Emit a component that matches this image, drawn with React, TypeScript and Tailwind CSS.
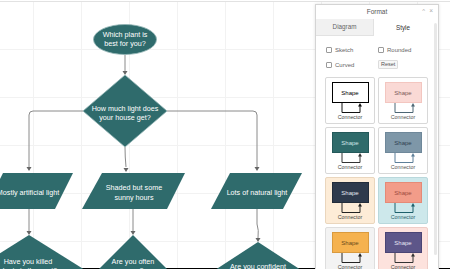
import React from 'react';

type CardStyle = {
  card: string;
  shape: string;
  line: string;
  label: string;
};

const cards: CardStyle[] = [
  { card: 'bg-white border-[#d8d8d8]', shape: 'bg-white border-[1.5px] border-black text-black', line: '#111111', label: 'text-[#444]' },
  { card: 'bg-white border-[#d8d8d8]', shape: 'bg-[#fad9d5] border border-[#f3c6c0] text-[#7a5a58]', line: '#4d6674', label: 'text-[#555]' },
  { card: 'bg-white border-[#d8d8d8]', shape: 'bg-[#2f6b6b] border border-[#24595a] text-[#cfe6e6]', line: '#333333', label: 'text-[#444]' },
  { card: 'bg-white border-[#d8d8d8]', shape: 'bg-[#7e97a8] border border-[#6f889a] text-[#2f4150]', line: '#5d7f99', label: 'text-[#555]' },
  { card: 'bg-[#fdecd7] border-[#ead6bd]', shape: 'bg-[#2e3a4c] border border-[#222c3a] text-[#e4e8ee]', line: '#222222', label: 'text-[#444]' },
  { card: 'bg-[#cde8eb] border-[#b9d8dc]', shape: 'bg-[#f29c89] border border-[#e58a77] text-[#9b4a3e]', line: '#1d5f6b', label: 'text-[#2b5f6b]' },
  { card: 'bg-[#f3f3f3] border-[#dedede]', shape: 'bg-[#f5b24f] border border-[#d99a3e] text-[#6a4a1a]', line: '#222222', label: 'text-[#444]' },
  { card: 'bg-[#fde2dd] border-[#efcdc7]', shape: 'bg-[#5d5689] border border-[#4a4474] text-[#e6e4f2]', line: '#333333', label: 'text-[#444]' },
];

const StyleCard: React.FC<{ s: CardStyle }> = ({ s }) => (
  <div className={`w-[50px] h-[47px] border rounded-[2px] flex flex-col items-center pt-[4px] ${s.card}`}>
    <div className={`w-[37px] h-[21px] flex items-center justify-center text-[6px] leading-none ${s.shape}`}>Shape</div>
    <svg width="37" height="11" className="block">
      <path d="M10 0 V9.5 H28 V2" fill="none" stroke={s.line} strokeWidth="1" />
      <polygon points="26,3.5 28,0 30,3.5" fill={s.line} />
    </svg>
    <div className={`text-[5.3px] leading-none mt-[1px] ${s.label}`}>Connector</div>
  </div>
);

const Check: React.FC<{ label: string }> = ({ label }) => (
  <div className="flex items-center gap-[3px]">
    <div className="w-[6px] h-[6px] border border-[#9a9a9a] rounded-[1px] bg-white" />
    <span className="text-[6px] leading-none text-[#666]">{label}</span>
  </div>
);

const FlowText: React.FC<{ x: number; y: number; children: React.ReactNode }> = ({ x, y, children }) => (
  <text x={x} y={y} textAnchor="middle" fill="#ffffff" fontSize="7.2">
    {children}
  </text>
);

const Flowchart: React.FC = () => {
  const teal = '#2f6b6c';
  const edge = '#8a8a8a';
  const arrow = (x: number, y: number) => (
    <polygon points={`${x - 2.5},${y - 4} ${x + 2.5},${y - 4} ${x},${y}`} fill="#666" />
  );
  return (
    <svg width="450" height="268" className="absolute left-0 top-0" fontFamily="'Liberation Sans', Arial, sans-serif">
      {/* start */}
      <ellipse cx="125" cy="37.5" rx="31.5" ry="15" fill={teal} stroke="#8fb3b3" strokeWidth="0.8" />
      <FlowText x={125} y={35}>Which plant is</FlowText>
      <FlowText x={125} y={44}>best for you?</FlowText>
      <line x1="125" y1="53" x2="125" y2="70" stroke={edge} />
      {arrow(125, 73)}

      {/* main decision */}
      <polygon points="125,73 167,109 125,145 83,109" fill={teal} stroke="#8fb3b3" strokeWidth="0.8" />
      <FlowText x={125} y={108.5}>How much light does</FlowText>
      <FlowText x={125} y={117.5}>your house get?</FlowText>

      <path d="M83 109 H33 Q29 109 29 113 V165" fill="none" stroke={edge} />
      {arrow(29, 169)}
      <path d="M167 109 H253 Q257 109 257 113 V165" fill="none" stroke={edge} />
      {arrow(257, 169)}
      <path d="M125 145 Q125 155 126 165" fill="none" stroke={edge} />
      {arrow(126, 170)}

      {/* light options */}
      <polygon points="3,171 73,171 55,207 -15,207" fill={teal} />
      <FlowText x={28} y={192.5}>Mostly artificial light</FlowText>
      <polygon points="102,171 185,171 167,207 82,207" fill={teal} />
      <FlowText x={134} y={188}>Shaded but some</FlowText>
      <FlowText x={134} y={197.5}>sunny hours</FlowText>
      <polygon points="230,171 302,171 283,207 211,207" fill={teal} />
      <FlowText x={257} y={192.5}>Lots of natural light</FlowText>

      <line x1="29" y1="207" x2="29" y2="229" stroke={edge} />
      {arrow(29, 233)}
      <line x1="133" y1="207" x2="133" y2="229" stroke={edge} />
      {arrow(133, 233)}
      <path d="M257 207 V222 Q259 228 258 236" fill="none" stroke={edge} />
      {arrow(258, 240)}

      {/* second decisions */}
      <polygon points="29,233 85,268 29,303 -27,268" fill={teal} />
      <FlowText x={28} y={262}>Have you killed</FlowText>
      <FlowText x={28} y={271}>plants in the past?</FlowText>
      <polygon points="133,233 168,268 133,303 98,268" fill={teal} />
      <FlowText x={133} y={262}>Are you often</FlowText>
      <FlowText x={133} y={271}>away?</FlowText>
      <polygon points="258,240 301,268 258,296 215,268" fill={teal} />
      <FlowText x={258} y={267}>Are you confident</FlowText>
    </svg>
  );
};

export default function App() {
  return (
    <div className="w-[450px] h-[269px] overflow-hidden bg-white font-['Liberation_Sans',Arial,sans-serif] flex flex-col">
      <div className="h-[1px] bg-white" />
      <div className="relative flex-1 border-t border-[#e2e2e2] bg-white bg-[linear-gradient(to_right,#f2f2f2_1px,transparent_1px),linear-gradient(to_bottom,#f2f2f2_1px,transparent_1px)] [background-size:48px_48px] [background-position:33px_47px]">
        <Flowchart />

        {/* floating format window */}
        <div className="absolute left-[315px] top-[2px] w-[124px] h-[280px] bg-white border border-[#d4d4d4] shadow-[0_0_3px_rgba(0,0,0,0.12)] flex flex-col">
          <div className="relative h-[14px] flex items-center justify-center">
            <span className="text-[6.5px] text-[#555] leading-none">Format</span>
            <span className="absolute right-[13px] top-[3px] text-[6px] text-[#aaa] leading-none">^</span>
            <span className="absolute right-[5px] top-[3px] text-[6.5px] text-[#aaa] leading-none">×</span>
          </div>
          <div className="flex flex-1 min-h-0">
            <div className="flex-1 flex flex-col">
              <div className="flex h-[17px]">
                <div className="w-[58px] bg-[#f1f1f1] border-b border-r border-[#e2e2e2] flex items-center justify-center text-[6.3px] text-[#666]">Diagram</div>
                <div className="flex-1 flex items-center justify-center text-[6.3px] text-[#333]">Style</div>
              </div>
              <div className="pl-[10px] pt-[11px] flex flex-col gap-[7px]">
                <div className="flex items-center">
                  <div className="w-[52px]"><Check label="Sketch" /></div>
                  <Check label="Rounded" />
                </div>
                <div className="flex items-center">
                  <div className="w-[52px]"><Check label="Curved" /></div>
                  <div className="h-[9px] px-[2px] border border-[#dcdcdc] bg-[#f7f7f7] rounded-[1px] flex items-center text-[5.5px] text-[#555] leading-none">Reset</div>
                </div>
              </div>
              <div className="pl-[9px] pt-[8px] grid grid-cols-[50px_50px] gap-x-[3px] gap-y-[3px]">
                {cards.map((s, i) => (
                  <StyleCard key={i} s={s} />
                ))}
              </div>
            </div>
            <div className="w-[6px] flex justify-center pt-[4px]">
              <div className="w-[3px] h-[232px] bg-[#e8e8e8] rounded-full" />
            </div>
          </div>
        </div>
      </div>
      <div className="h-[1px] bg-black" />
    </div>
  );
}
